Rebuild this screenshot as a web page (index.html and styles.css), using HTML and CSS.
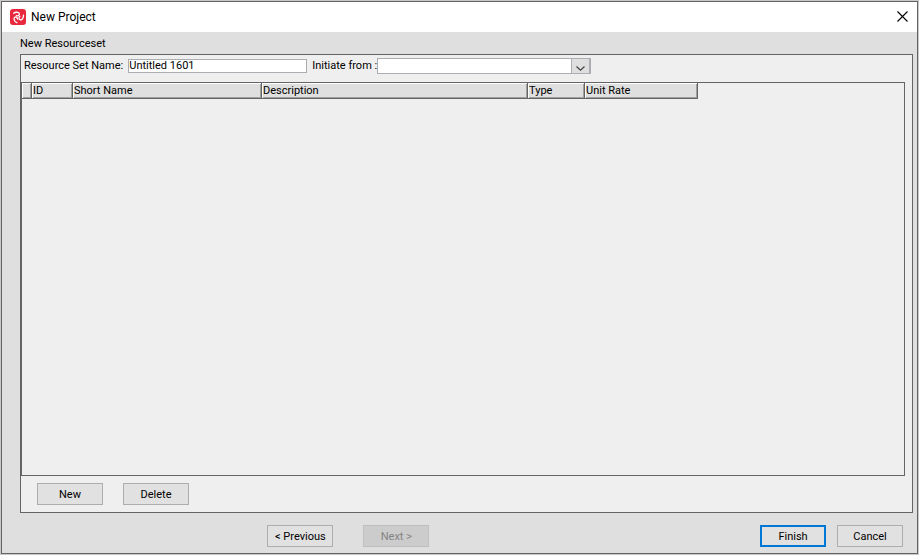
FILE: index.html
```html
<!DOCTYPE html>
<html lang="en">
<head>
    <meta charset="UTF-8">
    <meta name="viewport" content="width=device-width, initial-scale=1.0">
    <title>New Project</title>
    <link rel="stylesheet" href="styles.css">
</head>
<body>
    <div class="window">
        <header class="title-bar">
            <svg class="app-icon" width="16" height="16" viewBox="0 0 16 16" aria-hidden="true">
                <rect width="16" height="16" rx="3" fill="#e8283c"/>
                <g fill="none" stroke="#fff" stroke-width="1.3" stroke-linecap="round" stroke-linejoin="round">
                    <path d="M3.6 4.2C5.4 2.8 9.2 2.8 9.4 5C9.5 6.6 7.6 7.2 6.4 6.6"/>
                    <path d="M3.6 4.2C5.4 2.8 9.2 2.8 9.4 5C9.5 6.6 7.6 7.2 6.4 6.6" transform="rotate(120 8 8)"/>
                    <path d="M3.6 4.2C5.4 2.8 9.2 2.8 9.4 5C9.5 6.6 7.6 7.2 6.4 6.6" transform="rotate(240 8 8)"/>
                </g>
            </svg>
            <h1>New Project</h1>
            <button type="button" class="close-button" aria-label="Close">
                <svg width="11" height="11" viewBox="0 0 11 11" aria-hidden="true">
                    <path d="M.5 .5L10.5 10.5M10.5 .5L.5 10.5" fill="none" stroke="#000" stroke-width="1.1"/>
                </svg>
            </button>
        </header>

        <main class="content">
            <h2>New Resourceset</h2>
            <section class="panel">
                <div class="fields">
                    <label for="set-name">Resource Set Name:</label>
                    <input type="text" id="set-name" class="name-input" value="Untitled 1601">
                    <label for="initiate-from" class="from-label">Initiate from :</label>
                    <div class="select-box">
                        <select id="initiate-from">
                            <option></option>
                        </select>
                        <span class="select-arrow">
                            <svg width="9" height="5" viewBox="0 0 9 5" aria-hidden="true">
                                <path d="M.5 .5L4.5 4.2L8.5 .5" fill="none" stroke="#444" stroke-width="1.2"/>
                            </svg>
                        </span>
                    </div>
                </div>
                <div class="grid-box">
                    <table>
                        <colgroup>
                            <col class="col-mark">
                            <col class="col-id">
                            <col class="col-name">
                            <col class="col-description">
                            <col class="col-type">
                            <col class="col-rate">
                        </colgroup>
                        <thead>
                            <tr>
                                <th></th>
                                <th>ID</th>
                                <th>Short Name</th>
                                <th>Description</th>
                                <th>Type</th>
                                <th>Unit Rate</th>
                            </tr>
                        </thead>
                        <tbody></tbody>
                    </table>
                </div>
                <div class="panel-buttons">
                    <button type="button" class="button">New</button>
                    <button type="button" class="button">Delete</button>
                </div>
            </section>
        </main>

        <footer class="footer">
            <div class="steps">
                <button type="button" class="button">&lt; Previous</button>
                <button type="button" class="button" disabled>Next &gt;</button>
            </div>
            <div class="actions">
                <button type="button" class="button primary">Finish</button>
                <button type="button" class="button">Cancel</button>
            </div>
        </footer>
    </div>
</body>
</html>
```
FILE: styles.css
```css
* {
    box-sizing: border-box;
}
body {
    margin: 0;
    min-height: 100vh;
    padding: 1px;
    display: flex;
    background-color: #c8c8c8;
    color: #000;
    font-family: Roboto, "Liberation Sans", Arial, sans-serif;
    font-size: 11px;
    line-height: 14px;
}
button, input, select {
    font: inherit;
    color: inherit;
    margin: 0;
    border-radius: 0;
}
.window {
    flex: 1;
    display: flex;
    flex-direction: column;
    border: 1px solid #646464;
    background-color: #dfdfdf;
}
.title-bar {
    display: flex;
    align-items: center;
    height: 30px;
    padding: 0 8px;
    gap: 5px;
    background-color: #fff;
}
.title-bar h1 {
    margin: 0;
    font-size: 12px;
    font-weight: normal;
}
.close-button {
    display: flex;
    margin-left: auto;
    padding: 0 1px 2px;
    border: none;
    background: none;
}
.content {
    flex: 1;
    display: flex;
    flex-direction: column;
    padding: 5px 4px 0 18px;
}
.content h2 {
    margin: 0 0 3px;
    font-size: 11px;
    font-weight: normal;
}
.panel {
    flex: 1;
    display: flex;
    flex-direction: column;
    border: 1px solid #646464;
    background-color: #efefef;
}
.fields {
    display: flex;
    align-items: center;
    gap: 5px;
    height: 27px;
    padding: 0 3px 5px;
}
.from-label {
    width: 60px;
    white-space: nowrap;
}
.name-input {
    width: 179px;
    height: 14px;
    padding: 0;
    border: 1px solid #abadb3;
    background-color: #fff;
}
.select-box {
    position: relative;
    width: 214px;
    height: 16px;
}
.select-box select {
    appearance: none;
    display: block;
    width: 100%;
    height: 100%;
    padding: 0 20px 0 2px;
    border: 1px solid #abadb3;
    background-color: #fff;
}
.select-arrow {
    position: absolute;
    top: 0;
    right: 0;
    bottom: 0;
    width: 20px;
    display: flex;
    align-items: flex-end;
    justify-content: center;
    padding-bottom: 2px;
    border: 1px solid #abadb3;
    border-right-width: 2px;
    background-color: #dfdfdf;
    pointer-events: none;
}
.grid-box {
    flex: 1;
    margin-right: 7px;
    border: 1px solid #646464;
}
table {
    table-layout: fixed;
    width: 676px;
    border-collapse: separate;
    border-spacing: 0;
}
th {
    height: 16px;
    padding: 1px 1px 0;
    border-right: 1px solid #646464;
    border-bottom: 1px solid #646464;
    background-color: #dfdfdf;
    box-shadow: inset 1px 1px #fff, inset -1px -1px #a0a0a0;
    font-weight: normal;
    text-align: left;
    white-space: nowrap;
}
.col-mark {
    width: 10px;
}
.col-id {
    width: 41px;
}
.col-name {
    width: 189px;
}
.col-description {
    width: 266px;
}
.col-type {
    width: 57px;
}
.col-rate {
    width: 113px;
}
.panel-buttons {
    display: flex;
    gap: 20px;
    padding: 7px 16px;
}
.button {
    width: 66px;
    height: 22px;
    padding: 2px 0 0;
    border: 1px solid #adadad;
    background-color: #e1e1e1;
    text-align: center;
}
.button.primary {
    border: 2px solid #0078d7;
}
.button:disabled {
    border-color: #bfbfbf;
    background-color: #ccc;
    color: #838383;
}
.footer {
    display: flex;
    justify-content: space-between;
    padding: 12px 14px 6px 29%;
}
.steps {
    display: flex;
    gap: 30px;
}
.actions {
    display: flex;
    gap: 11px;
}
```
